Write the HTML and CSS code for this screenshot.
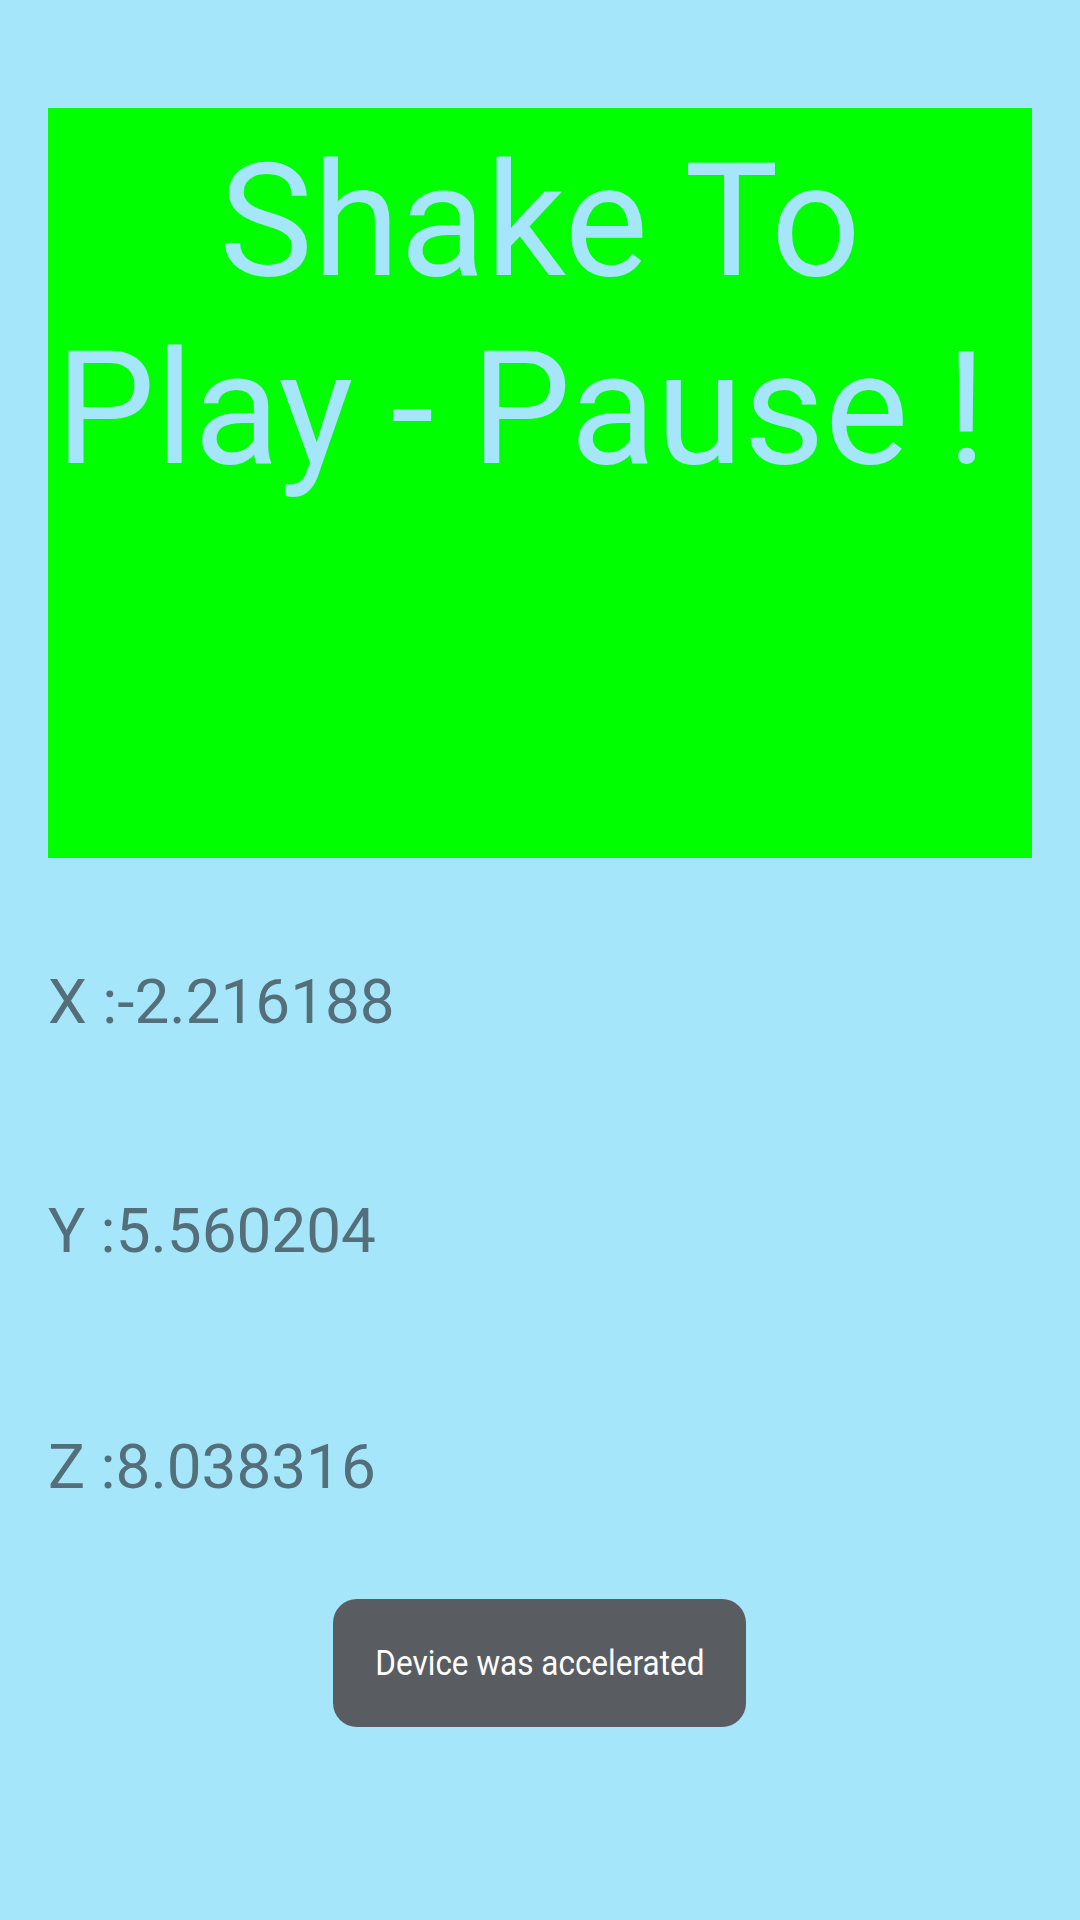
FILE: index.html
```html
<!DOCTYPE html>
<html>
<head>
<meta charset="utf-8">
<link rel="stylesheet" href="styles.css">
</head>
<body>
<div class="screen">
  <div class="banner">
    <div class="line">Shake To</div>
    <div class="line line2">Play - Pause !</div>
  </div>
  <div class="readings">
    <div class="reading r1">X :-2.216188</div>
    <div class="reading r2">Y :5.560204</div>
    <div class="reading r3">Z :8.038316</div>
  </div>
  <div class="toast"><span class="toast-text">Device was accelerated</span></div>
</div>
</body>
</html>
```
FILE: styles.css
```css
html, body {
  margin: 0;
  padding: 0;
  background: #a6e6fa;
}
.screen {
  position: relative;
  width: 1080px;
  height: 1920px;
  box-sizing: border-box;
  padding: 108px 48px 0;
  font-family: Roboto, "Noto Sans", sans-serif;
}
.banner {
  height: 750px;
  box-sizing: border-box;
  padding-top: 19px;
  background: #00ff00;
  color: #a6e6fa;
  font-size: 158px;
  line-height: 188px;
  text-align: center;
  white-space: nowrap;
}
.line2 {
  word-spacing: -2px;
  padding-right: 38px;
}
.readings {
  color: #546e7a;
  font-size: 62px;
  line-height: normal;
}
.reading { white-space: nowrap; }
.r1 { margin-top: 107px; }
.r2 { margin-top: 156px; }
.r3 { margin-top: 163px; }
.toast {
  position: absolute;
  left: 333px;
  top: 1599px;
  width: 413px;
  height: 128px;
  border-radius: 24px;
  background: #595d62;
  display: flex;
  align-items: center;
  justify-content: center;
}
.toast-text {
  display: inline-block;
  color: #ffffff;
  font-size: 35px;
  white-space: nowrap;
  transform: scaleX(0.9);
}
```
